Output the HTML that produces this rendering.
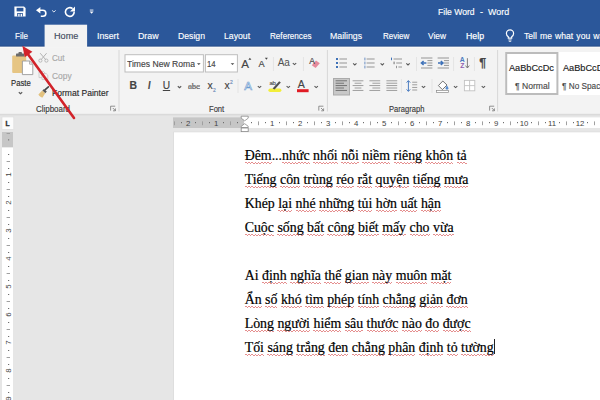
<!DOCTYPE html>
<html lang="vi">
<head>
<meta charset="utf-8">
<title>File Word - Word</title>
<style>
html,body{margin:0;padding:0;}
body{width:600px;height:400px;overflow:hidden;position:relative;background:#e6e6e6;font-family:'Liberation Sans',sans-serif;}
#bg{position:absolute;left:0;top:0;}
.t{position:absolute;white-space:nowrap;line-height:1;transform-origin:0 50%;-webkit-text-stroke:0.15px currentColor;}
.ln{position:absolute;left:244.7px;font-family:'Liberation Serif',serif;font-size:13.86px;line-height:1;color:#000;white-space:nowrap;-webkit-text-stroke:0.2px #000;}
.ln span{padding-bottom:1.6px;background-image:repeating-linear-gradient(90deg,#e58f8f 0 1.6px,transparent 1.6px 3.2px),repeating-linear-gradient(90deg,transparent 0 1.6px,#e58f8f 1.6px 3.2px);background-size:100% 1.4px,100% 1.4px;background-repeat:no-repeat;background-position:0 calc(100% - 1.7px),0 calc(100% - 0.5px);}
#caret{position:absolute;left:493.5px;top:339px;width:1px;height:14.6px;background:#222;}
</style>
</head>
<body>
<svg id="bg" width="600" height="400" viewBox="0 0 600 400">
<rect x="0" y="0" width="600" height="400" fill="#e6e6e6"/>
<rect x="0" y="0" width="600" height="46.8" fill="#2b579a"/>
<rect x="0" y="45.7" width="600" height="1.1" fill="#234a86"/>
<rect x="0" y="46.8" width="600" height="67.2" fill="#f3f3f3"/>
<rect x="0" y="46.8" width="600" height="1" fill="#fafafa"/>
<rect x="44.6" y="24.7" width="42.5" height="23" fill="#f3f3f3"/>
<rect x="0" y="113.8" width="600" height="1.6" fill="#dadada"/>
<rect x="173.2" y="131.6" width="427" height="269" fill="#dcdcdc"/>
<rect x="174" y="132.3" width="426" height="268" fill="#ffffff"/>
<rect x="173" y="117.4" width="71" height="10.6" fill="#c6c6c6"/>
<rect x="244" y="117.4" width="356" height="10.6" fill="#ffffff"/>
<rect x="2" y="132" width="11" height="15.5" fill="#c6c6c6"/>
<rect x="2" y="147.5" width="11" height="253" fill="#ffffff"/>
<rect x="2" y="117" width="11.8" height="12.5" fill="#fcfcfc" stroke="#dcdcdc" stroke-width="0.6"/>
<rect x="174" y="121.4" width="1" height="3.8" fill="#a0a0a0"/>
<rect x="181" y="122" width="1" height="1.2" fill="#6e6e6e"/>
<rect x="195" y="122" width="1" height="1.2" fill="#6e6e6e"/>
<rect x="202" y="121.4" width="1" height="3.8" fill="#a0a0a0"/>
<rect x="209" y="122" width="1" height="1.2" fill="#6e6e6e"/>
<rect x="223" y="122" width="1" height="1.2" fill="#6e6e6e"/>
<rect x="230" y="121.4" width="1" height="3.8" fill="#a0a0a0"/>
<rect x="237" y="122" width="1" height="1.2" fill="#6e6e6e"/>
<rect x="251" y="122" width="1" height="1.2" fill="#6e6e6e"/>
<rect x="258" y="121.4" width="1" height="3.8" fill="#a0a0a0"/>
<rect x="265" y="122" width="1" height="1.2" fill="#6e6e6e"/>
<rect x="279" y="122" width="1" height="1.2" fill="#6e6e6e"/>
<rect x="286" y="121.4" width="1" height="3.8" fill="#a0a0a0"/>
<rect x="293" y="122" width="1" height="1.2" fill="#6e6e6e"/>
<rect x="307" y="122" width="1" height="1.2" fill="#6e6e6e"/>
<rect x="314" y="121.4" width="1" height="3.8" fill="#a0a0a0"/>
<rect x="321" y="122" width="1" height="1.2" fill="#6e6e6e"/>
<rect x="335" y="122" width="1" height="1.2" fill="#6e6e6e"/>
<rect x="342" y="121.4" width="1" height="3.8" fill="#a0a0a0"/>
<rect x="349" y="122" width="1" height="1.2" fill="#6e6e6e"/>
<rect x="363" y="122" width="1" height="1.2" fill="#6e6e6e"/>
<rect x="370" y="121.4" width="1" height="3.8" fill="#a0a0a0"/>
<rect x="377" y="122" width="1" height="1.2" fill="#6e6e6e"/>
<rect x="391" y="122" width="1" height="1.2" fill="#6e6e6e"/>
<rect x="398" y="121.4" width="1" height="3.8" fill="#a0a0a0"/>
<rect x="405" y="122" width="1" height="1.2" fill="#6e6e6e"/>
<rect x="419" y="122" width="1" height="1.2" fill="#6e6e6e"/>
<rect x="426" y="121.4" width="1" height="3.8" fill="#a0a0a0"/>
<rect x="433" y="122" width="1" height="1.2" fill="#6e6e6e"/>
<rect x="447" y="122" width="1" height="1.2" fill="#6e6e6e"/>
<rect x="454" y="121.4" width="1" height="3.8" fill="#a0a0a0"/>
<rect x="461" y="122" width="1" height="1.2" fill="#6e6e6e"/>
<rect x="475" y="122" width="1" height="1.2" fill="#6e6e6e"/>
<rect x="482" y="121.4" width="1" height="3.8" fill="#a0a0a0"/>
<rect x="489" y="122" width="1" height="1.2" fill="#6e6e6e"/>
<rect x="503" y="122" width="1" height="1.2" fill="#6e6e6e"/>
<rect x="510" y="121.4" width="1" height="3.8" fill="#a0a0a0"/>
<rect x="517" y="122" width="1" height="1.2" fill="#6e6e6e"/>
<rect x="531" y="122" width="1" height="1.2" fill="#6e6e6e"/>
<rect x="538" y="121.4" width="1" height="3.8" fill="#a0a0a0"/>
<rect x="545" y="122" width="1" height="1.2" fill="#6e6e6e"/>
<rect x="559" y="122" width="1" height="1.2" fill="#6e6e6e"/>
<rect x="566" y="121.4" width="1" height="3.8" fill="#a0a0a0"/>
<rect x="573" y="122" width="1" height="1.2" fill="#6e6e6e"/>
<rect x="587" y="122" width="1" height="1.2" fill="#6e6e6e"/>
<rect x="594" y="121.4" width="1" height="3.8" fill="#a0a0a0"/>
<rect x="8" y="154" width="1.2" height="1" fill="#6e6e6e"/>
<rect x="6.6" y="161" width="3.4" height="1" fill="#a0a0a0"/>
<rect x="8" y="168" width="1.2" height="1" fill="#6e6e6e"/>
<rect x="8" y="182" width="1.2" height="1" fill="#6e6e6e"/>
<rect x="6.6" y="189" width="3.4" height="1" fill="#a0a0a0"/>
<rect x="8" y="196" width="1.2" height="1" fill="#6e6e6e"/>
<rect x="8" y="210" width="1.2" height="1" fill="#6e6e6e"/>
<rect x="6.6" y="217" width="3.4" height="1" fill="#a0a0a0"/>
<rect x="8" y="224" width="1.2" height="1" fill="#6e6e6e"/>
<rect x="8" y="238" width="1.2" height="1" fill="#6e6e6e"/>
<rect x="6.6" y="245" width="3.4" height="1" fill="#a0a0a0"/>
<rect x="8" y="252" width="1.2" height="1" fill="#6e6e6e"/>
<rect x="8" y="266" width="1.2" height="1" fill="#6e6e6e"/>
<rect x="6.6" y="273" width="3.4" height="1" fill="#a0a0a0"/>
<rect x="8" y="280" width="1.2" height="1" fill="#6e6e6e"/>
<rect x="8" y="294" width="1.2" height="1" fill="#6e6e6e"/>
<rect x="6.6" y="301" width="3.4" height="1" fill="#a0a0a0"/>
<rect x="8" y="308" width="1.2" height="1" fill="#6e6e6e"/>
<rect x="8" y="322" width="1.2" height="1" fill="#6e6e6e"/>
<rect x="6.6" y="329" width="3.4" height="1" fill="#a0a0a0"/>
<rect x="8" y="336" width="1.2" height="1" fill="#6e6e6e"/>
<rect x="8" y="350" width="1.2" height="1" fill="#6e6e6e"/>
<rect x="6.6" y="357" width="3.4" height="1" fill="#a0a0a0"/>
<rect x="8" y="364" width="1.2" height="1" fill="#6e6e6e"/>
<rect x="8" y="378" width="1.2" height="1" fill="#6e6e6e"/>
<rect x="6.6" y="385" width="3.4" height="1" fill="#a0a0a0"/>
<rect x="8" y="392" width="1.2" height="1" fill="#6e6e6e"/>
<rect x="8" y="139.4" width="1.2" height="1" fill="#6e6e6e"/>
<rect x="6.6" y="133" width="3.4" height="1" fill="#a0a0a0"/>
<path d="M241.2 116.2h7v2l-3.5 2.6-3.5-2.6z" fill="#fff" stroke="#8a8a8a" stroke-width="0.8"/>
<path d="M241.2 127.5v-1.2l3.5-2.6 3.5 2.6v1.2z" fill="#fff" stroke="#8a8a8a" stroke-width="0.8"/>
<rect x="241.2" y="128" width="7" height="3.6" fill="#fff" stroke="#8a8a8a" stroke-width="0.8"/>
<rect x="118.5" y="50" width="1" height="61.5" fill="#d8d8d8"/>
<rect x="326.9" y="50" width="1" height="61.5" fill="#d8d8d8"/>
<rect x="497.1" y="50" width="1" height="61.5" fill="#d8d8d8"/>
<rect x="272.9" y="57" width="1" height="14" fill="#e4e4e4"/>
<rect x="302.9" y="57" width="1" height="14" fill="#e4e4e4"/>
<rect x="237.5" y="79" width="1" height="14" fill="#e4e4e4"/>
<rect x="416.0" y="57" width="1" height="14" fill="#e4e4e4"/>
<rect x="453.1" y="57" width="1" height="14" fill="#e4e4e4"/>
<rect x="473.9" y="57" width="1" height="14" fill="#e4e4e4"/>
<rect x="400.9" y="79" width="1" height="14" fill="#e4e4e4"/>
<rect x="431.5" y="79" width="1" height="14" fill="#e4e4e4"/>
<path d="M18.8 92.25L20.5 93.75L22.2 92.25" fill="none" stroke="#585858" stroke-width="1.1"/>
<path d="M177.8 86.25L179.5 87.75L181.2 86.25" fill="none" stroke="#585858" stroke-width="1.1"/>
<path d="M292.8 63.05L294.5 64.55L296.2 63.05" fill="none" stroke="#585858" stroke-width="1.1"/>
<path d="M257.8 86.05L259.5 87.55L261.2 86.05" fill="none" stroke="#585858" stroke-width="1.1"/>
<path d="M286.6 86.05L288.3 87.55L290.0 86.05" fill="none" stroke="#585858" stroke-width="1.1"/>
<path d="M314.5 86.05L316.2 87.55L317.9 86.05" fill="none" stroke="#585858" stroke-width="1.1"/>
<path d="M353.1 63.45L354.8 64.95L356.5 63.45" fill="none" stroke="#585858" stroke-width="1.1"/>
<path d="M380.6 63.45L382.3 64.95L384.0 63.45" fill="none" stroke="#585858" stroke-width="1.1"/>
<path d="M406.3 63.45L408.0 64.95L409.7 63.45" fill="none" stroke="#585858" stroke-width="1.1"/>
<path d="M421.8 86.05L423.5 87.55L425.2 86.05" fill="none" stroke="#585858" stroke-width="1.1"/>
<path d="M453.9 86.05L455.6 87.55L457.3 86.05" fill="none" stroke="#585858" stroke-width="1.1"/>
<path d="M481.7 86.05L483.4 87.55L485.1 86.05" fill="none" stroke="#585858" stroke-width="1.1"/>
<path d="M110.6 110.6v-4.4h4.6" fill="none" stroke="#777" stroke-width="0.8"/>
<path d="M112.8 108l2.6 2.6m0 -2.2v2.4h-2.4" fill="none" stroke="#777" stroke-width="0.8"/>
<path d="M318.8 110.6v-4.4h4.6" fill="none" stroke="#777" stroke-width="0.8"/>
<path d="M321.0 108l2.6 2.6m0 -2.2v2.4h-2.4" fill="none" stroke="#777" stroke-width="0.8"/>
<path d="M489.6 110.6v-4.4h4.6" fill="none" stroke="#777" stroke-width="0.8"/>
<path d="M491.8 108l2.6 2.6m0 -2.2v2.4h-2.4" fill="none" stroke="#777" stroke-width="0.8"/>
<rect x="125" y="54.7" width="78.4" height="17.3" fill="#fff" stroke="#bdbdbd" stroke-width="1"/>
<rect x="205.4" y="54.7" width="32" height="17.3" fill="#fff" stroke="#bdbdbd" stroke-width="1"/>
<path d="M197.0 63.30h3.6L198.8 65.10z" fill="#444"/>
<path d="M230.7 63.30h3.6L232.5 65.10z" fill="#444"/>
<rect x="505.2" y="52" width="95" height="43" fill="#fff"/>
<rect x="506.2" y="53" width="51.2" height="41" fill="#fff" stroke="#bcbcbc" stroke-width="2"/>
<path d="M14.4 6.4h9.6l1.6 1.6v8.4h-11.2z" fill="#fff"/>
<rect x="16.6" y="7.8" width="6.8" height="3.6" fill="#2b579a"/>
<rect x="17.2" y="13" width="5.6" height="3.4" fill="#2b579a"/>
<rect x="18.2" y="13.8" width="1.4" height="2.6" fill="#fff"/>
<rect x="20.6" y="13.8" width="1.4" height="2.6" fill="#fff"/>
<path d="M36 10.2l4.4-3.2v6.4z" fill="#fff"/>
<path d="M39.5 10.2h3.3a3 3 0 0 1 0 6.1h-2" fill="none" stroke="#fff" stroke-width="1.6"/>
<path d="M52.1 10.40L53.9 12.00L55.7 10.40" fill="none" stroke="#dfe6f2" stroke-width="1"/>
<path d="M72.6 8.6a4.4 4.4 0 1 0 1.6 3.2" fill="none" stroke="#fff" stroke-width="1.6"/>
<path d="M75 6.4v5h-5z" fill="#fff"/>
<rect x="89.8" y="9.6" width="3.6" height="0.9" fill="#ffffff"/>
<path d="M89.6 11.6h4l-2 2.1z" fill="#ffffff"/>
<path d="M508.3 38.2v-1.5c-1.2-.9-1.9-2-1.9-3.3a3.6 3.6 0 0 1 7.2 0c0 1.3-.7 2.4-1.9 3.3v1.5z" fill="none" stroke="#fff" stroke-width="1.2"/>
<path d="M508.4 39.9h3.2M508.8 41.3h2.4" stroke="#fff" stroke-width="0.9"/>
<rect x="12.2" y="55.4" width="14" height="17.6" rx="1" fill="#e6c583"/>
<rect x="16" y="53.6" width="8.4" height="3" rx="0.6" fill="#6b6b6b"/>
<rect x="18.4" y="52" width="3.6" height="2.4" rx="1" fill="#6b6b6b"/>
<path d="M22.4 61h7.2l3.2 3.2v10.4h-10.4z" fill="#fff" stroke="#9a9a9a" stroke-width="0.9"/>
<path d="M29.6 61v3.2h3.2" fill="none" stroke="#9a9a9a" stroke-width="0.8"/>
<path d="M40.2 53.2l5.6 6.6M46.6 53.2l-5.6 6.6" stroke="#b3b3b3" stroke-width="1" fill="none"/>
<circle cx="40.4" cy="60.6" r="1.6" fill="none" stroke="#b3b3b3" stroke-width="0.9"/>
<circle cx="46.4" cy="60.6" r="1.6" fill="none" stroke="#b3b3b3" stroke-width="0.9"/>
<path d="M39 71.4h4.4l1.6 1.6v4.6h-6z" fill="none" stroke="#c4c4c4" stroke-width="0.8"/>
<path d="M42 73.6h4.2l1.6 1.6v4.4h-5.8z" fill="#f3f3f3" stroke="#c4c4c4" stroke-width="0.8"/>
<path d="M38.4 94.6l3.8-4 3 2.6-2.6 4.2c-1.4.2-3.2-.8-4.2-2.8z" fill="#e3c27f"/>
<path d="M42.4 90.4l1.6-1.4 2.8 2.6-1.4 1.6z" fill="#555"/>
<path d="M45.2 89.6l3.2-2.8" stroke="#444" stroke-width="1.6" stroke-linecap="round"/>
<path d="M248.4 59.8l1.5-2 1.5 2z" fill="#444"/>
<path d="M264.9 57.8h3l-1.5 2z" fill="#444"/>
<path d="M311.8 65.2l4.2-4.6 3.8 2.6-4.2 4.8z" fill="#e58a9c"/>
<rect x="268.4" y="88.6" width="13" height="3.4" rx="1.7" fill="#f2ee3a"/>
<path d="M272.6 88.4l6.6-7.2 1.6 1.4-6.2 6.8z" fill="#505050"/>
<rect x="297" y="89.2" width="11.6" height="3" fill="#e01b24"/>
<rect x="336" y="58" width="2" height="2" fill="#3f72b8"/>
<rect x="339.4" y="58.5" width="7.6" height="1" fill="#959595"/>
<rect x="336" y="62" width="2" height="2" fill="#3f72b8"/>
<rect x="339.4" y="62.5" width="7.6" height="1" fill="#959595"/>
<rect x="336" y="66" width="2" height="2" fill="#3f72b8"/>
<rect x="339.4" y="66.5" width="7.6" height="1" fill="#959595"/>
<rect x="364.4" y="57.6" width="1" height="2.8" fill="#6a8fc4"/>
<rect x="366.6" y="58.5" width="8.0" height="1" fill="#959595"/>
<rect x="364.4" y="61.6" width="1" height="2.8" fill="#6a8fc4"/>
<rect x="366.6" y="62.5" width="8.0" height="1" fill="#959595"/>
<rect x="364.4" y="65.6" width="1" height="2.8" fill="#6a8fc4"/>
<rect x="366.6" y="66.5" width="8.0" height="1" fill="#959595"/>
<rect x="391" y="57.6" width="1" height="2.6" fill="#3f72b8"/>
<rect x="393.4" y="61.6" width="1.4" height="2.6" fill="#959595"/>
<rect x="396" y="65.8" width="1" height="2.4" fill="#959595"/>
<rect x="393.6" y="58.5" width="8.4" height="1" fill="#959595"/>
<rect x="396.2" y="62.5" width="5.8" height="1" fill="#959595"/>
<rect x="398.4" y="66.5" width="3.6" height="1" fill="#959595"/>
<rect x="421" y="57.5" width="11.4" height="1" fill="#959595"/>
<rect x="421" y="67.5" width="11.4" height="1" fill="#959595"/>
<rect x="427.4" y="60.1" width="5.0" height="1" fill="#959595"/>
<rect x="427.4" y="62.5" width="5.0" height="1" fill="#959595"/>
<rect x="427.4" y="64.9" width="5.0" height="1" fill="#959595"/>
<path d="M426.4 63h-4.6m1.8 -2l-2.2 2 2.2 2" fill="none" stroke="#3f72b8" stroke-width="1.5"/>
<rect x="437.6" y="57.5" width="11.4" height="1" fill="#959595"/>
<rect x="437.6" y="67.5" width="11.4" height="1" fill="#959595"/>
<rect x="444.0" y="60.1" width="5.0" height="1" fill="#959595"/>
<rect x="444.0" y="62.5" width="5.0" height="1" fill="#959595"/>
<rect x="444.0" y="64.9" width="5.0" height="1" fill="#959595"/>
<path d="M438.0 63h4.6m-1.8 -2l2.2 2 -2.2 2" fill="none" stroke="#3f72b8" stroke-width="1.5"/>
<path d="M467.4 58.2v9.6m-1.9 -2.2l1.9 2.4 1.9-2.4" fill="none" stroke="#707070" stroke-width="0.9"/>
<rect x="333.5" y="78.5" width="16" height="16.5" fill="#c8c8c8" stroke="#ababab" stroke-width="1"/>
<rect x="335.6" y="80.35" width="11.4" height="0.9" fill="#6a6a6a"/>
<rect x="335.6" y="82.75" width="8.4" height="0.9" fill="#6a6a6a"/>
<rect x="335.6" y="85.14999999999999" width="11.4" height="0.9" fill="#6a6a6a"/>
<rect x="335.6" y="87.55" width="8.4" height="0.9" fill="#6a6a6a"/>
<rect x="335.6" y="89.95" width="11.4" height="0.9" fill="#6a6a6a"/>
<rect x="352.6" y="80.35" width="10.8" height="0.9" fill="#959595"/>
<rect x="354.6" y="82.75" width="6.8" height="0.9" fill="#959595"/>
<rect x="352.6" y="85.14999999999999" width="10.8" height="0.9" fill="#959595"/>
<rect x="354.6" y="87.55" width="6.8" height="0.9" fill="#959595"/>
<rect x="352.6" y="89.95" width="10.8" height="0.9" fill="#959595"/>
<rect x="369.4" y="80.35" width="10.8" height="0.9" fill="#959595"/>
<rect x="372.4" y="82.75" width="7.8" height="0.9" fill="#959595"/>
<rect x="369.4" y="85.14999999999999" width="10.8" height="0.9" fill="#959595"/>
<rect x="372.4" y="87.55" width="7.8" height="0.9" fill="#959595"/>
<rect x="369.4" y="89.95" width="10.8" height="0.9" fill="#959595"/>
<rect x="386.4" y="80.35" width="10.8" height="0.9" fill="#959595"/>
<rect x="386.4" y="82.75" width="10.8" height="0.9" fill="#959595"/>
<rect x="386.4" y="85.14999999999999" width="10.8" height="0.9" fill="#959595"/>
<rect x="386.4" y="87.55" width="10.8" height="0.9" fill="#959595"/>
<rect x="386.4" y="89.95" width="10.8" height="0.9" fill="#959595"/>
<path d="M408.4 80.8v10.4m-1.8 -8.6l1.8 -2 1.8 2m-3.6 6.8l1.8 2 1.8 -2" fill="none" stroke="#4a7cc0" stroke-width="1"/>
<rect x="412.2" y="81.75" width="5.0" height="0.9" fill="#959595"/>
<rect x="412.2" y="84.35" width="5.0" height="0.9" fill="#959595"/>
<rect x="412.2" y="86.95" width="5.0" height="0.9" fill="#959595"/>
<rect x="412.2" y="89.55" width="5.0" height="0.9" fill="#959595"/>
<path d="M438.4 85.6l4.4-4.6 4.2 4-4.6 4.6z" fill="#fff" stroke="#666" stroke-width="0.9"/>
<path d="M447 85.4c.9 1.2 1.4 2.2 1.4 2.9a1.4 1.4 0 0 1-2.8 0c0-.7.5-1.7 1.4-2.9z" fill="#5b8fd0"/>
<rect x="436.4" y="90.6" width="12" height="2" fill="#fff" stroke="#8a8a8a" stroke-width="0.7"/>
<rect x="464.4" y="80.4" width="10.4" height="10.4" fill="#fff" stroke="#c2c2c2" stroke-width="0.9"/>
<path d="M469.6 80.4v10.4M464.4 85.6h10.4" stroke="#c2c2c2" stroke-width="0.9"/>
<text x="188.1" y="125.6" text-anchor="middle" font-size="7.8" fill="#444" font-family="'Liberation Sans',sans-serif">2</text>
<text x="216.1" y="125.6" text-anchor="middle" font-size="7.8" fill="#444" font-family="'Liberation Sans',sans-serif">1</text>
<text x="272.1" y="125.6" text-anchor="middle" font-size="7.8" fill="#444" font-family="'Liberation Sans',sans-serif">1</text>
<text x="300.1" y="125.6" text-anchor="middle" font-size="7.8" fill="#444" font-family="'Liberation Sans',sans-serif">2</text>
<text x="328.1" y="125.6" text-anchor="middle" font-size="7.8" fill="#444" font-family="'Liberation Sans',sans-serif">3</text>
<text x="356.1" y="125.6" text-anchor="middle" font-size="7.8" fill="#444" font-family="'Liberation Sans',sans-serif">4</text>
<text x="384.1" y="125.6" text-anchor="middle" font-size="7.8" fill="#444" font-family="'Liberation Sans',sans-serif">5</text>
<text x="412.1" y="125.6" text-anchor="middle" font-size="7.8" fill="#444" font-family="'Liberation Sans',sans-serif">6</text>
<text x="440.1" y="125.6" text-anchor="middle" font-size="7.8" fill="#444" font-family="'Liberation Sans',sans-serif">7</text>
<text x="468.1" y="125.6" text-anchor="middle" font-size="7.8" fill="#444" font-family="'Liberation Sans',sans-serif">8</text>
<text x="496.1" y="125.6" text-anchor="middle" font-size="7.8" fill="#444" font-family="'Liberation Sans',sans-serif">9</text>
<text x="524.1" y="125.6" text-anchor="middle" font-size="7.8" fill="#444" font-family="'Liberation Sans',sans-serif">10</text>
<text x="552.1" y="125.6" text-anchor="middle" font-size="7.8" fill="#444" font-family="'Liberation Sans',sans-serif">11</text>
<text x="580.1" y="125.6" text-anchor="middle" font-size="7.8" fill="#444" font-family="'Liberation Sans',sans-serif">12</text>
<text transform="translate(10.9 174.7) rotate(-90)" text-anchor="middle" font-size="7.8" fill="#444" font-family="'Liberation Sans',sans-serif">1</text>
<text transform="translate(10.9 202.7) rotate(-90)" text-anchor="middle" font-size="7.8" fill="#444" font-family="'Liberation Sans',sans-serif">2</text>
<text transform="translate(10.9 230.7) rotate(-90)" text-anchor="middle" font-size="7.8" fill="#444" font-family="'Liberation Sans',sans-serif">3</text>
<text transform="translate(10.9 258.7) rotate(-90)" text-anchor="middle" font-size="7.8" fill="#444" font-family="'Liberation Sans',sans-serif">4</text>
<text transform="translate(10.9 286.7) rotate(-90)" text-anchor="middle" font-size="7.8" fill="#444" font-family="'Liberation Sans',sans-serif">5</text>
<text transform="translate(10.9 314.7) rotate(-90)" text-anchor="middle" font-size="7.8" fill="#444" font-family="'Liberation Sans',sans-serif">6</text>
<text transform="translate(10.9 342.7) rotate(-90)" text-anchor="middle" font-size="7.8" fill="#444" font-family="'Liberation Sans',sans-serif">7</text>
<text transform="translate(10.9 370.7) rotate(-90)" text-anchor="middle" font-size="7.8" fill="#444" font-family="'Liberation Sans',sans-serif">8</text>
<text transform="translate(10.9 398.7) rotate(-90)" text-anchor="middle" font-size="7.8" fill="#444" font-family="'Liberation Sans',sans-serif">9</text>
</svg>
<div class="t m" style="left:438.00px;top:7.17px;font-size:9.6px;color:#ffffff;font-family:'Liberation Sans',sans-serif;transform:scaleX(0.8954);">File Word</div>
<div class="t m" style="left:480.00px;top:7.17px;font-size:9.6px;color:#ffffff;font-family:'Liberation Sans',sans-serif;transform:scaleX(0.9366);">-</div>
<div class="t m" style="left:488.40px;top:7.17px;font-size:9.6px;color:#ffffff;font-family:'Liberation Sans',sans-serif;transform:scaleX(0.9275);">Word</div>
<div class="t m" style="left:15.00px;top:30.82px;font-size:9.9px;color:#ffffff;font-family:'Liberation Sans',sans-serif;transform:scaleX(0.8165);">File</div>
<div class="t m" style="left:53.70px;top:30.82px;font-size:9.9px;color:#3f4a5e;font-family:'Liberation Sans',sans-serif;transform:scaleX(0.9224);">Home</div>
<div class="t m" style="left:96.50px;top:30.82px;font-size:9.9px;color:#ffffff;font-family:'Liberation Sans',sans-serif;transform:scaleX(0.8865);">Insert</div>
<div class="t m" style="left:138.00px;top:30.82px;font-size:9.9px;color:#ffffff;font-family:'Liberation Sans',sans-serif;transform:scaleX(0.8938);">Draw</div>
<div class="t m" style="left:177.50px;top:30.82px;font-size:9.9px;color:#ffffff;font-family:'Liberation Sans',sans-serif;transform:scaleX(0.8780);">Design</div>
<div class="t m" style="left:224.20px;top:30.82px;font-size:9.9px;color:#ffffff;font-family:'Liberation Sans',sans-serif;transform:scaleX(0.8801);">Layout</div>
<div class="t m" style="left:269.50px;top:30.82px;font-size:9.9px;color:#ffffff;font-family:'Liberation Sans',sans-serif;transform:scaleX(0.8218);">References</div>
<div class="t m" style="left:330.40px;top:30.82px;font-size:9.9px;color:#ffffff;font-family:'Liberation Sans',sans-serif;transform:scaleX(0.8859);">Mailings</div>
<div class="t m" style="left:382.60px;top:30.82px;font-size:9.9px;color:#ffffff;font-family:'Liberation Sans',sans-serif;transform:scaleX(0.8151);">Review</div>
<div class="t m" style="left:428.40px;top:30.82px;font-size:9.9px;color:#ffffff;font-family:'Liberation Sans',sans-serif;transform:scaleX(0.8477);">View</div>
<div class="t m" style="left:466.00px;top:30.82px;font-size:9.9px;color:#ffffff;font-family:'Liberation Sans',sans-serif;transform:scaleX(0.8862);-webkit-text-stroke:0.25px #fff;">Help</div>
<div class="t m" style="left:524.40px;top:30.82px;font-size:9.9px;color:#ffffff;font-family:'Liberation Sans',sans-serif;transform:scaleX(0.8680);word-spacing:0.9px;">Tell me what you want to do</div>
<div class="t m" style="left:10.90px;top:77.64px;font-size:9.4px;color:#2a2a2a;font-family:'Liberation Sans',sans-serif;transform:scaleX(0.8214);">Paste</div>
<div class="t m" style="left:52.40px;top:53.44px;font-size:9.4px;color:#a8a8a8;font-family:'Liberation Sans',sans-serif;transform:scaleX(0.8634);">Cut</div>
<div class="t m" style="left:52.40px;top:70.64px;font-size:9.4px;color:#a8a8a8;font-family:'Liberation Sans',sans-serif;transform:scaleX(0.8954);">Copy</div>
<div class="t m" style="left:52.40px;top:88.04px;font-size:9.4px;color:#2a2a2a;font-family:'Liberation Sans',sans-serif;transform:scaleX(0.9129);">Format Painter</div>
<div class="t m" style="left:36.00px;top:104.78px;font-size:9.0px;color:#3a3a3a;font-family:'Liberation Sans',sans-serif;transform:scaleX(0.8824);">Clipboard</div>
<div class="t m" style="left:209.40px;top:104.78px;font-size:9.0px;color:#3a3a3a;font-family:'Liberation Sans',sans-serif;transform:scaleX(0.8437);">Font</div>
<div class="t m" style="left:388.60px;top:104.78px;font-size:9.0px;color:#3a3a3a;font-family:'Liberation Sans',sans-serif;transform:scaleX(0.8422);">Paragraph</div>
<div class="t" style="left:127.00px;top:59.04px;width:67.5px;height:11.3px;overflow:hidden;"><div class="t m" style="left:0;top:0;font-size:9.4px;color:#444;font-family:'Liberation Sans',sans-serif;transform:scaleX(0.9166);">Times New Roman</div></div>
<div class="t m" style="left:207.40px;top:59.04px;font-size:9.4px;color:#444;font-family:'Liberation Sans',sans-serif;transform:scaleX(0.8240);">14</div>
<div class="t m" style="left:508.80px;top:63.00px;font-size:9.8px;color:#1a1a1a;font-family:'Liberation Sans',sans-serif;transform:scaleX(0.9369);">AaBbCcDc</div>
<div class="t m" style="left:563.20px;top:63.00px;font-size:9.8px;color:#1a1a1a;font-family:'Liberation Sans',sans-serif;transform:scaleX(0.9369);">AaBbCcDc</div>
<div class="t m" style="left:514.60px;top:80.79px;font-size:9.4px;color:#4a4a4a;font-family:'Liberation Sans',sans-serif;transform:scaleX(0.9165);">¶ Normal</div>
<div class="t m" style="left:562.40px;top:80.79px;font-size:9.4px;color:#4a4a4a;font-family:'Liberation Sans',sans-serif;transform:scaleX(0.8791);">¶ No Spacing</div>
<div class="t" style="left:5.6px;top:120.61px;font-size:6.6px;color:#333;font-family:'Liberation Sans',sans-serif;font-weight:bold;-webkit-text-stroke:0.4px #333;">L</div>
<div class="t" style="left:129.6px;top:80.60px;font-size:10.4px;color:#444;font-family:'Liberation Sans',sans-serif;font-weight:bold;">B</div>
<div class="t" style="left:147.6px;top:80.60px;font-size:10.4px;color:#444;font-family:'Liberation Sans',sans-serif;font-style:italic;font-weight:bold;transform:scaleX(0.85);">I</div>
<div class="t" style="left:162.8px;top:80.57px;font-size:10.2px;color:#444;font-family:'Liberation Sans',sans-serif;text-decoration:underline;text-decoration-thickness:0.8px;text-underline-offset:1px;">U</div>
<div class="t" style="left:188px;top:81.86px;font-size:9px;color:#555;font-family:'Liberation Serif',serif;text-decoration:line-through;text-decoration-thickness:0.5px;text-decoration-color:#999;letter-spacing:-0.2px;">abc</div>
<div class="t" style="left:207.4px;top:80.80px;font-size:10.4px;color:#444;font-family:'Liberation Sans',sans-serif;">x</div>
<div class="t" style="left:213px;top:87.77px;font-size:5px;color:#6a8ab8;font-family:'Liberation Sans',sans-serif;">2</div>
<div class="t" style="left:224.4px;top:80.80px;font-size:10.4px;color:#444;font-family:'Liberation Sans',sans-serif;">x</div>
<div class="t" style="left:230px;top:80.37px;font-size:5px;color:#6a8ab8;font-family:'Liberation Sans',sans-serif;">2</div>
<div class="t" style="left:241.2px;top:57.58px;font-size:11.6px;color:#444;font-family:'Liberation Sans',sans-serif;">A</div>
<div class="t" style="left:258.4px;top:59.61px;font-size:9.2px;color:#444;font-family:'Liberation Sans',sans-serif;">A</div>
<div class="t" style="left:277.8px;top:58.13px;font-size:10px;color:#505050;font-family:'Liberation Sans',sans-serif;letter-spacing:-0.3px;-webkit-text-stroke:0;">Aa</div>
<div class="t" style="left:309.2px;top:57.29px;font-size:8.4px;color:#444;font-family:'Liberation Sans',sans-serif;">A</div>
<div class="t" style="left:244.2px;top:80.18px;font-size:11.6px;color:#f4f8fd;font-family:'Liberation Sans',sans-serif;-webkit-text-stroke:0.6px #6b9bd0;">A</div>
<div class="t" style="left:269.4px;top:80.32px;font-size:6px;color:#555;font-family:'Liberation Sans',sans-serif;letter-spacing:-0.3px;">ab</div>
<div class="t" style="left:297.8px;top:79.23px;font-size:10.6px;color:#444;font-family:'Liberation Sans',sans-serif;">A</div>
<div class="t" style="left:479.2px;top:57.10px;font-size:12.4px;color:#444;font-family:'Liberation Sans',sans-serif;font-weight:bold;">¶</div>
<div class="t" style="left:459.8px;top:57.14px;font-size:6.8px;color:#4a7abf;font-family:'Liberation Sans',sans-serif;font-weight:bold;-webkit-text-stroke:0;">A</div>
<div class="t" style="left:460.2px;top:63.14px;font-size:6.8px;color:#9060b0;font-family:'Liberation Sans',sans-serif;font-weight:bold;-webkit-text-stroke:0;">Z</div>
<div class="ln" style="top:149.39px"><span>Đêm</span>...<span>nhức</span> <span>nhối</span> <span>nỗi</span> <span>niềm</span> <span>riêng</span> <span>khôn</span> <span>tả</span></div>
<div class="ln" style="top:173.39px"><span>Tiếng</span> <span>côn</span> <span>trùng</span> <span>réo</span> <span>rắt</span> <span>quyện</span> <span>tiếng</span> <span>mưa</span></div>
<div class="ln" style="top:197.39px">Khép <span>lại</span> <span>nhé</span> <span>những</span> <span>tủi</span> <span>hờn</span> <span>uất</span> <span>hận</span></div>
<div class="ln" style="top:221.39px"><span>Cuộc</span> <span>sống</span> <span>bất</span> <span>công</span> <span>biết</span> <span>mấy</span> <span>cho</span> <span>vừa</span></div>
<div class="ln" style="top:269.39px">Ai <span>định</span> <span>nghĩa</span> <span>thế</span> <span>gian</span> <span>này</span> <span>muôn</span> <span>mặt</span></div>
<div class="ln" style="top:293.39px"><span>Ẩn</span> <span>số</span> <span>khó</span> <span>tìm</span> <span>phép</span> <span>tính</span> <span>chẳng</span> <span>giản</span> <span>đơn</span></div>
<div class="ln" style="top:317.39px"><span>Lòng</span> <span>người</span> <span>hiểm</span> <span>sâu</span> <span>thước</span> <span>nào</span> <span>đo</span> <span>được</span></div>
<div class="ln" style="top:341.39px"><span>Tối</span> <span>sáng</span> <span>trắng</span> <span>đen</span> <span>chẳng</span> <span>phân</span> <span>định</span> <span>tỏ</span> <span>tường</span></div>
<div id="caret"></div>
<svg class="t" style="left:0;top:0;" width="600" height="400" viewBox="0 0 600 400">
<line x1="74" y1="118" x2="26" y2="51.5" stroke="#d2232a" stroke-width="2.6" stroke-linecap="round"/>
<polygon points="22.3,45.8 24.8,57.2 32.4,51.8" fill="#d2232a"/>
</svg>
</body>
</html>
